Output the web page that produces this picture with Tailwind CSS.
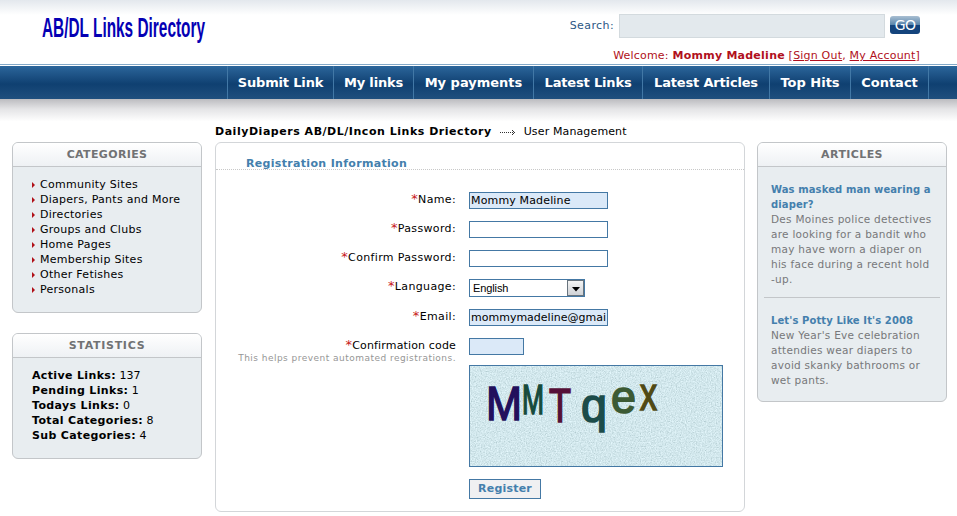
<!DOCTYPE html>
<html lang="en">
<head>
<meta charset="utf-8">
<title>AB/DL Links Directory</title>
<script src="https://cdn.jsdelivr.net/npm/@tailwindcss/browser@4"></script>
</head>
<body class="w-[957px] h-[516px] overflow-hidden bg-white font-['DejaVu_Sans',Verdana,sans-serif] text-[11px] leading-[15px] text-black">
<header class="h-[64px] flex justify-between bg-linear-to-b from-[#e3e8ed] to-white to-[15px] pl-[42px] pr-[37px]">
  <svg class="w-[180px] h-[50px]" viewBox="0 0 180 50"><text x="0" y="37" textLength="163" lengthAdjust="spacingAndGlyphs" font-family="Liberation Sans Narrow, Liberation Sans, sans-serif" font-weight="bold" font-size="27" fill="#0500b4">AB/DL Links Directory</text></svg>
  <div class="pt-[14px] flex flex-col items-end">
    <div class="flex items-center text-[#2c5784]">
      <span class="mr-[5px] -mt-[2px] tracking-[0.4px]">Search:</span>
      <div class="w-[266px] h-[24px] bg-[#e3e9ed] border border-[#d3dade]"></div>
      <div class="ml-[5px] -mt-[2px] w-[30px] h-[18px] rounded-[3px] bg-linear-to-b from-[#a9bfd2] from-0% via-[#5a86ac] via-48% to-[#14447c] to-52% text-white text-[14px] leading-[18px] text-center tracking-[-0.8px]">GO</div>
    </div>
    <div class="mt-[10px] text-[#b01020] whitespace-nowrap tracking-[0.2px]">Welcome: <b class="tracking-[0.25px]">Mommy Madeline</b> [<u>Sign Out</u>, <u>My Account</u>]</div>
  </div>
</header>
<div class="h-px bg-[#83a9c8]"></div>
<nav class="mt-px h-[33px] flex pl-[227px] bg-linear-to-b from-[#2c669b] via-[#0f4071] via-55% to-[#1f4f7e] text-white font-bold text-[13px] leading-[33px] text-center whitespace-nowrap tracking-[-0.17px]">
  <div class="w-[106px] border-l border-[#4278a6]">Submit Link</div>
  <div class="w-[80px] border-l border-[#4278a6]">My links</div>
  <div class="w-[120px] border-l border-[#4278a6] tracking-normal">My payments</div>
  <div class="w-[109px] border-l border-[#4278a6]">Latest Links</div>
  <div class="w-[127px] border-l border-[#4278a6]">Latest Articles</div>
  <div class="w-[81px] border-l border-[#4278a6] tracking-normal">Top Hits</div>
  <div class="w-[79px] border-x border-[#4278a6] tracking-normal">Contact</div>
</nav>
<div class="h-[25px] bg-linear-to-b from-[#bcbcc0] via-[#e4e4e6] via-40% to-white to-90%"></div>
<div class="h-[18px] flex items-start pl-[215px] whitespace-nowrap">
  <b class="tracking-[0.53px]">DailyDiapers AB/DL/Incon Links Driectory</b>
  <svg class="ml-[8px] mt-[5px] w-[16px] h-[6px]" viewBox="0 0 16 6" shape-rendering="crispEdges" fill="#333"><path d="M0 3h1v1H0zM2 3h1v1H2zM4 3h1v1H4zM6 3h1v1H6zM8 3h1v1H8zM10 3h1v1h-1zM12 1h1v1h-1zM13 2h1v1h-1zM14 3h1v1h-1zM13 4h1v1h-1zM12 5h1v1h-1zM12 3h1v1h-1z"/></svg>
  <span class="ml-[8px] tracking-[0.13px]">User Management</span>
</div>
<main class="flex items-start pl-[12px]">
  <aside class="w-[190px] mr-[13px] flex flex-col gap-[20px]">
    <section class="h-[171px] rounded-[6px] border border-[#c3c6c9] bg-[#e8edf0] overflow-hidden">
      <h2 class="h-[24px] border-b border-[#c3c6c9] bg-linear-to-b from-white to-[#eef1f4] text-center font-bold leading-[24px] text-[#717274] tracking-[0.35px]">CATEGORIES</h2>
      <ul class="pt-[10px] pl-[19px] tracking-[0.27px] [&>li]:flex [&>li]:items-center [&>li]:gap-[5px] [&_i]:border-y-[3px] [&_i]:border-y-transparent [&_i]:border-l-[3px] [&_i]:border-l-[#b01018]">
        <li><i></i>Community Sites</li><li><i></i>Diapers, Pants and More</li><li><i></i>Directories</li><li><i></i>Groups and Clubs</li><li><i></i>Home Pages</li><li><i></i>Membership Sites</li><li><i></i>Other Fetishes</li><li><i></i>Personals</li>
      </ul>
    </section>
    <section class="h-[126px] rounded-[6px] border border-[#c3c6c9] bg-[#e8edf0] overflow-hidden">
      <h2 class="h-[24px] border-b border-[#c3c6c9] bg-linear-to-b from-white to-[#eef1f4] text-center font-bold leading-[24px] text-[#717274] tracking-[0.7px]">STATISTICS</h2>
      <div class="pt-[10px] pl-[19px] [&_b]:tracking-[0.35px]">
        <p><b>Active Links:</b> 137</p><p><b>Pending Links:</b> 1</p><p><b>Todays Links:</b> 0</p><p><b>Total Categories:</b> 8</p><p><b>Sub Categories:</b> 4</p>
      </div>
    </section>
  </aside>
  <section class="w-[530px] h-[370px] mr-[12px] rounded-[6px] border border-[#d3d6d9]">
    <h1 class="h-[27px] pt-[13px] pl-[30px] border-b border-dotted border-[#c8c8c8] font-bold text-[#447fad] tracking-[0.32px]">Registration Information</h1>
    <form class="pt-[22px] grid grid-cols-[240px_1fr] gap-x-[13px] grid-rows-[29px_29px_29px_30px_29px_27px_114px_20px] items-start [&_label]:text-right [&_label]:whitespace-nowrap [&_label]:tracking-[0.35px] [&_em]:not-italic [&_em]:text-[13px] [&_em]:leading-[10px] [&_em]:text-[#c81818]">
      <label><em>*</em>Name:</label><div class="w-[139px] h-[17px] border border-[#4478a4] bg-[#dbe9f8] pl-px overflow-hidden whitespace-nowrap leading-[16px] tracking-[0.15px]">Mommy Madeline</div>
      <label><em>*</em>Password:</label><div class="w-[139px] h-[17px] border border-[#4478a4]"></div>
      <label><em>*</em>Confirm Password:</label><div class="w-[139px] h-[17px] border border-[#4478a4]"></div>
      <label><em>*</em>Language:</label>
      <div class="w-[116px] h-[18px] border border-[#4478a4] flex justify-between pl-[3px] font-['Liberation_Sans',Arial,sans-serif] leading-[17px]"><span class="tracking-[-0.1px]">English</span><span class="w-[17px] border border-[#68747e] bg-linear-to-b from-[#f4f4f4] to-[#cfd2d6] flex items-center justify-center"><svg class="w-[8px] h-[5px] mt-[2px]" viewBox="0 0 8 5"><path d="M0 0h8L4 4.5z"/></svg></span></div>
      <label><em>*</em>Email:</label><div class="w-[139px] h-[17px] border border-[#4478a4] bg-[#dbe9f8] pl-px overflow-hidden whitespace-nowrap leading-[16px]">mommymadeline@gmai</div>
      <label><em>*</em><span class="tracking-[0.15px]">Confirmation code</span><span class="block text-[9px] leading-[10px] text-[#969696] tracking-[0.47px]">This helps prevent automated registrations.</span></label><div class="w-[55px] h-[17px] border border-[#4478a4] bg-[#dbe9f8]"></div>
      <span></span>
      <svg class="w-[254px] h-[102px]" viewBox="0 0 254 102" font-family="Liberation Sans, Arial, sans-serif">
        <filter id="grain" x="0" y="0" width="100%" height="100%"><feTurbulence type="fractalNoise" baseFrequency="0.8" numOctaves="2" seed="4"/><feColorMatrix values="0.4 0 0 0 0.53  0.35 0 0 0 0.65  0.35 0 0 0 0.67  0 0 0 0 1" color-interpolation-filters="sRGB"/></filter>
        <rect width="254" height="102" fill="#cbe0e5"/>
        <rect width="254" height="102" filter="url(#grain)"/>
        <rect x=".5" y=".5" width="253" height="101" fill="none" stroke="#4478a4"/>
        <g stroke-width="1.6">
          <text x="17" y="55" font-size="49" textLength="36" lengthAdjust="spacingAndGlyphs" fill="#22105c" stroke="#22105c">M</text>
          <text x="53" y="49" font-size="42" textLength="22" lengthAdjust="spacingAndGlyphs" fill="#164a3c" stroke="#164a3c">M</text>
          <text x="80" y="57" font-size="49" textLength="22" lengthAdjust="spacingAndGlyphs" fill="#561038" stroke="#561038">T</text>
          <text x="112" y="57" font-size="48" textLength="26" lengthAdjust="spacingAndGlyphs" fill="#1c4c4a" stroke="#1c4c4a">q</text>
          <text x="142" y="48" font-size="47" textLength="25" lengthAdjust="spacingAndGlyphs" fill="#3c5a34" stroke="#3c5a34">e</text>
          <text x="171" y="45" font-size="47" textLength="17" lengthAdjust="spacingAndGlyphs" fill="#514a14" stroke="#514a14">x</text>
        </g>
      </svg>
      <span></span><div class="w-[72px] h-[20px] border border-[#4478a4] bg-[#f0f0f2] text-center leading-[18px] font-bold text-[#447fad] tracking-[0.2px]">Register</div>
    </form>
  </section>
  <aside class="w-[190px] h-[260px] rounded-[6px] border border-[#c3c6c9] bg-[#e8edf0] overflow-hidden text-[#77787a] whitespace-nowrap [&_h3]:text-[10px] [&_h3]:tracking-[0.1px] [&_p]:text-[10.5px] [&_p]:tracking-[0.27px]">
    <h2 class="h-[24px] border-b border-[#c3c6c9] bg-linear-to-b from-white to-[#eef1f4] text-center font-bold leading-[24px] text-[#717274] tracking-[0.4px]">ARTICLES</h2>
    <article class="h-[131px] mx-[6px] pt-[15px] pl-[7px] border-b border-[#c3c6c9]">
      <h3 class="font-bold text-[#447fad]">Was masked man wearing a<br>diaper?</h3>
      <p>Des Moines police detectives<br>are looking for a bandit who<br>may have worn a diaper on<br>his face during a recent hold<br>-up.</p>
    </article>
    <article class="mx-[6px] pt-[15px] pl-[7px]">
      <h3 class="font-bold text-[#447fad]">Let's Potty Like It's 2008</h3>
      <p>New Year's Eve celebration<br>attendies wear diapers to<br>avoid skanky bathrooms or<br>wet pants.</p>
    </article>
  </aside>
</main>
</body>
</html>
